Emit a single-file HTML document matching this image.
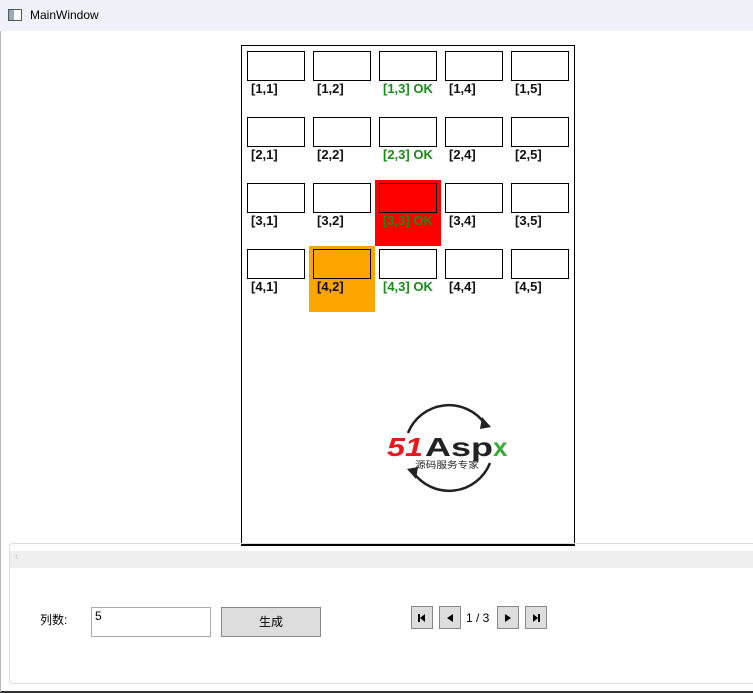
<!DOCTYPE html>
<html><head><meta charset="utf-8"><style>
*{margin:0;padding:0;box-sizing:border-box}
body{width:753px;height:693px;overflow:hidden;background:#fff;font-family:"Liberation Sans","Noto Sans CJK SC",sans-serif;position:relative}
.abs{position:absolute}
.tb{left:0;top:0;width:753px;height:31px;background:#eef1f8;font-size:12px;color:#000}
.cell{width:58px;height:30px;border:1px solid #000;background:#fff}
.lbl{font-size:13px;font-weight:bold;color:#111;white-space:nowrap}
.ok{color:#1a8a1a}
.nb{width:22px;height:23px;background:#ddd;border:1px solid #888;display:flex;align-items:center;justify-content:center}
</style></head><body>
<div class="abs tb"><div class="abs" style="left:8px;top:9px;width:14px;height:12px;border:1px solid #555;background:#fff"><div style="width:5px;height:10px;background:#9ab"></div></div><div class="abs" style="left:30px;top:8px">MainWindow</div></div>
<div class="abs" style="left:0;top:31px;width:753px;height:662px;border-left:1px solid #bbb;border-bottom:2px solid #333"></div>
<div class="abs" style="left:241px;top:45px;width:334px;height:501px;border:1px solid #000;border-bottom:2px solid #000"></div>
<div class="abs" style="left:375px;top:180px;width:66px;height:66px;background:#f00"></div>
<div class="abs" style="left:309px;top:246px;width:66px;height:66px;background:#ffa500"></div>
<div id="g"></div>
<script>
var g=document.getElementById('g'),h='';
for(var r=0;r<4;r++)for(var c=0;c<5;c++){var x=247+66*c,y=51+66*r;
var bg=(r==2&&c==2)?'#f00':(r==3&&c==1)?'#ffa500':'#fff';
h+='<div class="abs cell" style="left:'+x+'px;top:'+y+'px;background:'+bg+'"></div>';
h+='<div class="abs lbl'+(c==2?' ok':'')+'" style="left:'+(x+4)+'px;top:'+(y+30)+'px">['+(r+1)+','+(c+1)+']'+(c==2?' OK':'')+'</div>';}
g.innerHTML=h;
</script>
<svg class="abs" style="left:385px;top:400px" width="130" height="96" viewBox="0 0 130 96">
<path d="M23 33 A44 44 0 0 1 100 24" fill="none" stroke="#222" stroke-width="2.5"/>
<path d="M97 17 L106 27 L95 29 Z" fill="#222"/>
<path d="M105 63 A44 44 0 0 1 28 72" fill="none" stroke="#222" stroke-width="2.5"/>
<path d="M31 79 L22 69 L33 67 Z" fill="#222"/>
<text x="2" y="56" font-family="Liberation Sans" font-weight="bold" font-style="italic" font-size="26" fill="#e8171c" textLength="36" lengthAdjust="spacingAndGlyphs">51</text>
<text x="40" y="56" font-family="Liberation Sans" font-weight="bold" font-size="26" fill="#222" textLength="68" lengthAdjust="spacingAndGlyphs">Asp</text>
<text x="108" y="56" font-family="Liberation Sans" font-weight="bold" font-size="26" fill="#3aa935">x</text>
<text x="30" y="68" font-family="Noto Sans CJK SC" font-size="9" fill="#222" textLength="64" lengthAdjust="spacingAndGlyphs">源码服务专家</text>
</svg>
<div class="abs" style="left:9px;top:543px;width:760px;height:141px;border:1px solid #ddd;border-radius:4px"></div>
<div class="abs" style="left:10px;top:551px;width:743px;height:17px;background:#efefef;font-size:10px;color:#bbb;padding-left:5px">‹</div>
<div class="abs" style="left:40px;top:611px;font-size:12px">列数:</div>
<div class="abs" style="left:91px;top:607px;width:120px;height:30px;border:1px solid #aaa;font-size:12px;padding:1px 3px">5</div>
<div class="abs" style="left:221px;top:607px;width:100px;height:30px;border:1px solid #888;background:#ddd;font-size:12px;text-align:center;line-height:28px">生成</div>
<div class="abs nb" style="left:411px;top:606px"><svg width="10" height="10"><rect x="1" y="1" width="2" height="8"/><path d="M3 5 L8 1 L8 9Z"/></svg></div>
<div class="abs nb" style="left:439px;top:606px"><svg width="10" height="10"><path d="M2 5 L8 1 L8 9Z"/></svg></div>
<div class="abs" style="left:466px;top:611px;font-size:12px">1 / 3</div>
<div class="abs nb" style="left:497px;top:606px"><svg width="10" height="10"><path d="M8 5 L2 1 L2 9Z"/></svg></div>
<div class="abs nb" style="left:525px;top:606px"><svg width="10" height="10"><path d="M7 5 L2 1 L2 9Z"/><rect x="7" y="1" width="2" height="8"/></svg></div>
</body></html>
